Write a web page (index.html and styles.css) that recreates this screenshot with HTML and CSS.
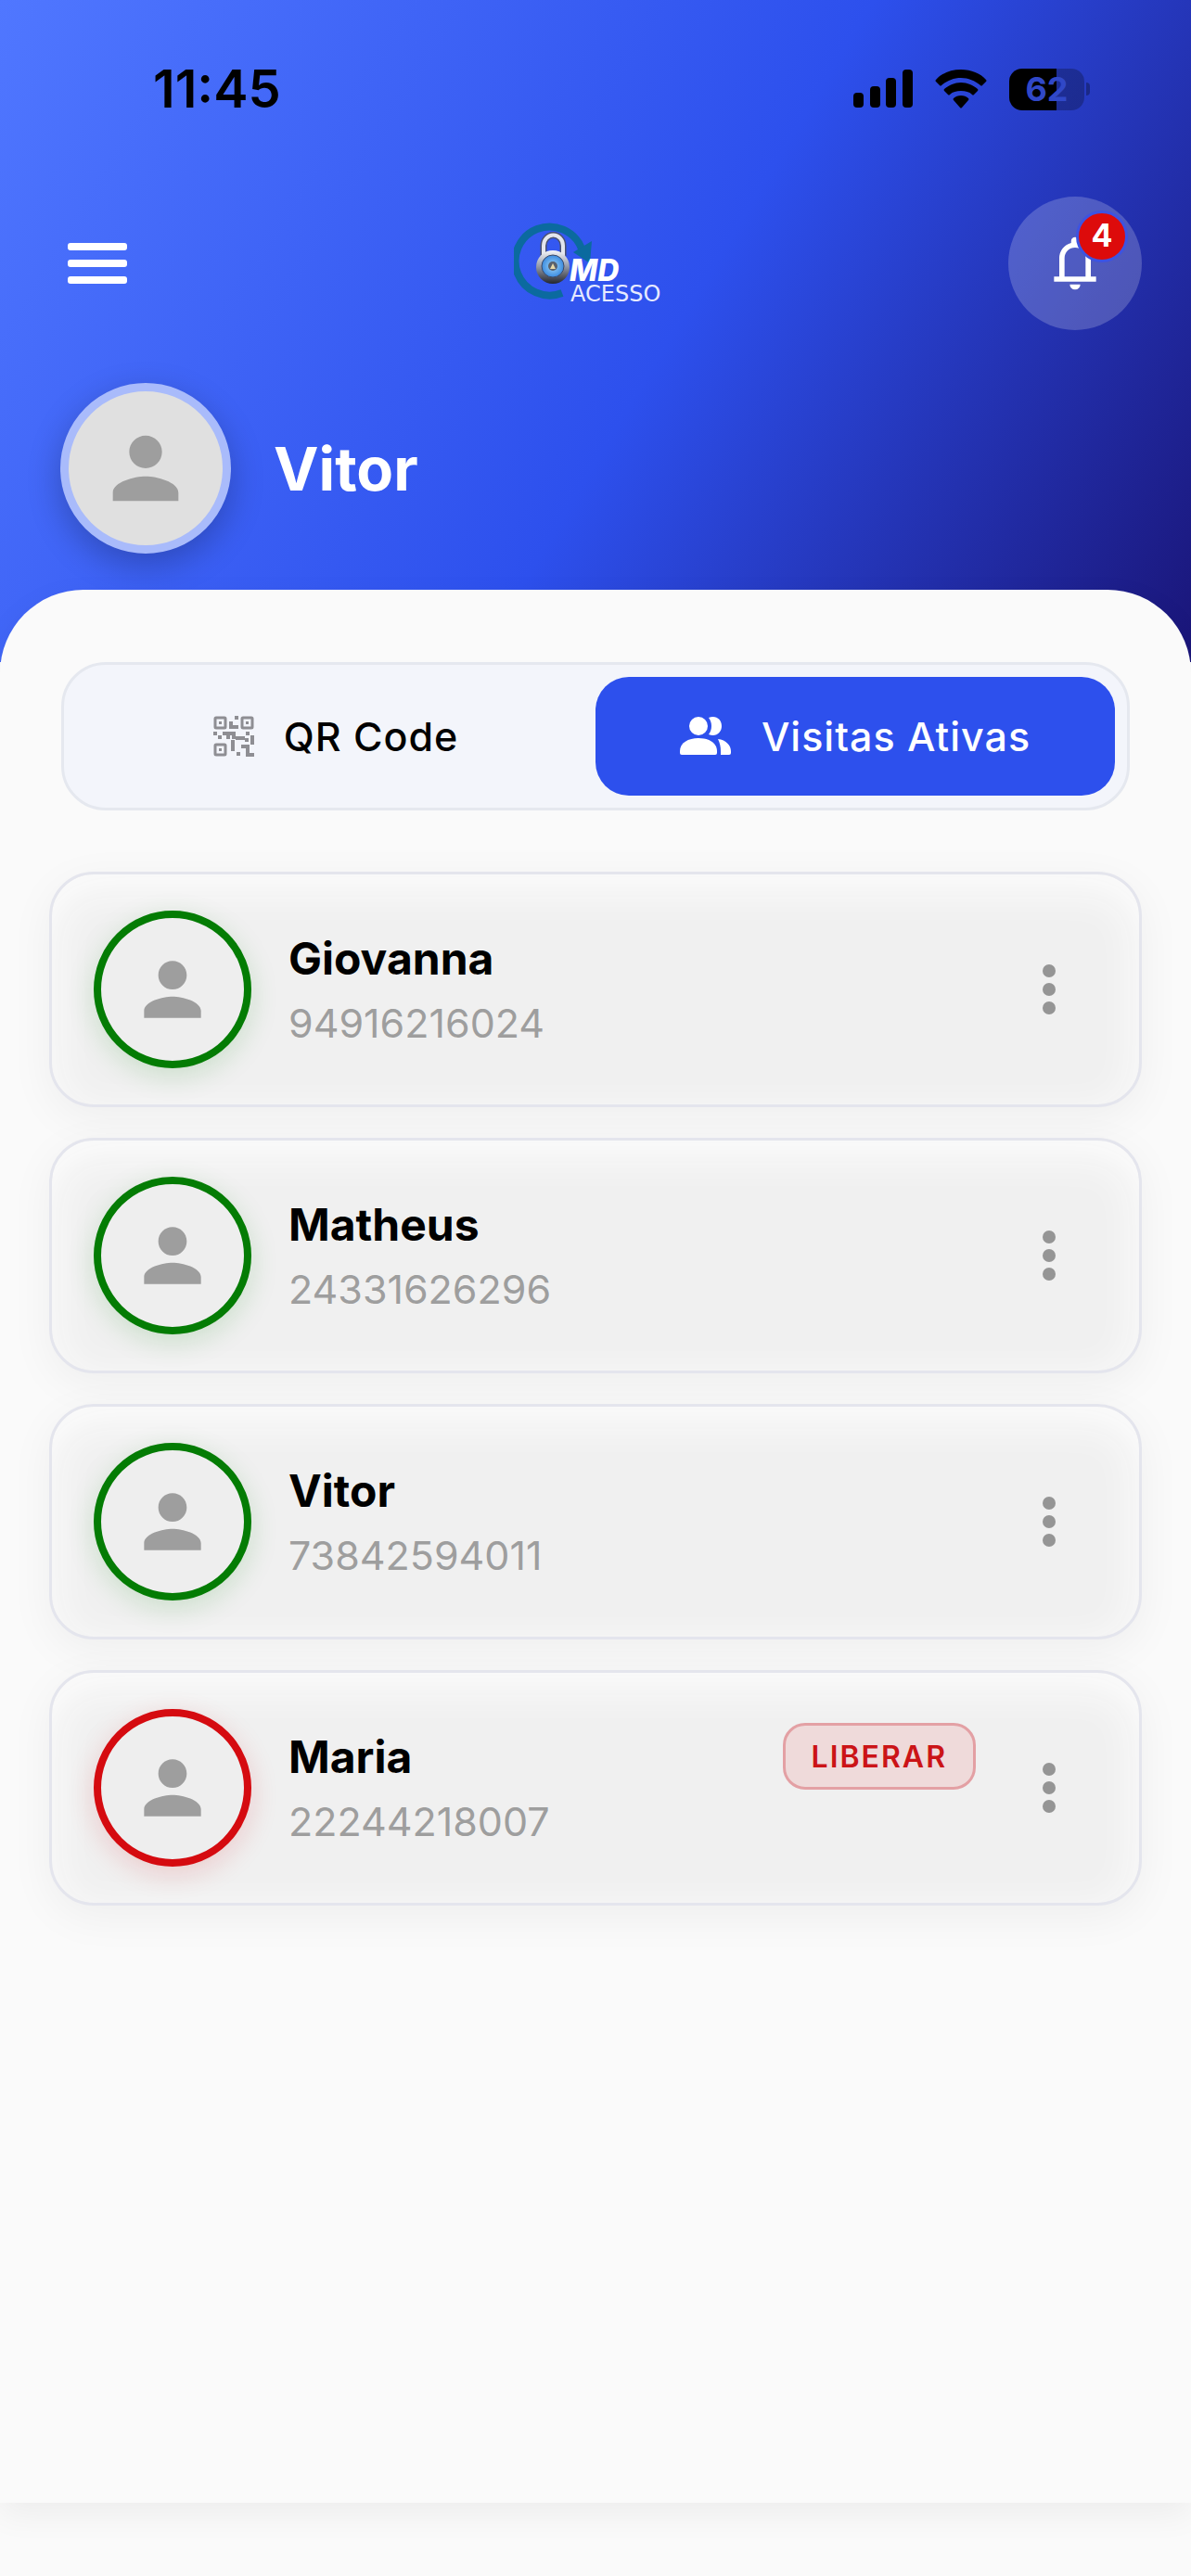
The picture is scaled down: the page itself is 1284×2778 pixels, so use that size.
FILE: index.html
```html
<!DOCTYPE html>
<html lang="pt-BR">
    <head>
        <meta charset="utf-8">
        <meta name="viewport" content="width=device-width, initial-scale=1">
        <title>MD Acesso - Visitas Ativas</title>
        <link rel="stylesheet" href="styles.css">
    </head>
    <body>
        <!-- icones reutilizados -->
        <svg class="sprites" aria-hidden="true">
            <symbol id="pessoa" viewBox="0 0 24 24">
                <path d="M12 12c2.21 0 4-1.79 4-4s-1.79-4-4-4-4 1.79-4 4 1.79 4 4 4zm0 2c-2.67 0-8 1.34-8 4v2h16v-2c0-2.66-5.33-4-8-4z"/>
            </symbol>
            <symbol id="pontos" viewBox="0 0 14 54">
                <circle cx="7" cy="7" r="7"/>
                <circle cx="7" cy="27" r="7"/>
                <circle cx="7" cy="47" r="7"/>
            </symbol>
        </svg>

        <header class="topo">
            <div class="status">
                <span class="hora">11:45</span>
                <div class="status-icones">
                    <svg width="64" height="42" viewBox="0 0 64 42">
                        <rect x="0" y="25" width="11" height="16" rx="4"/>
                        <rect x="18" y="18" width="11" height="23" rx="4"/>
                        <rect x="35" y="9" width="11" height="32" rx="4"/>
                        <rect x="53" y="0" width="11" height="41" rx="4"/>
                    </svg>
                    <svg width="56" height="42" viewBox="0 0 56 42">
                        <path d="M28 0C17 0 7 4 1 11q-1 1 0 2l4 4q1 1 2 0C13 12 20 9 28 9s15 3 21 8q1 1 2 0l4-4q1-1 0-2C49 4 39 0 28 0z"/>
                        <path d="M28 14c-7 0-13 3-18 7q-1 1 0 2l4 4q1 1 2 0c3-3 7-4 12-4s9 1 12 4q1 1 2 0l4-4q1-1 0-2c-5-4-11-7-18-7z"/>
                        <path d="M28 28c-3 0-6 1-8 3q-1 1 0 2l7 8q1 1 2 0l7-8q1-1 0-2c-2-2-5-3-8-3z"/>
                    </svg>
                    <div class="bateria"><span>62</span></div>
                </div>
            </div>

            <nav class="barra">
                <button class="btn-menu" aria-label="Abrir menu">
                    <svg width="64" height="44" viewBox="0 0 64 44">
                        <rect x="0" y="0" width="64" height="8" rx="3"/>
                        <rect x="0" y="18" width="64" height="8" rx="3"/>
                        <rect x="0" y="36" width="64" height="8" rx="3"/>
                    </svg>
                </button>

                <svg class="logo" width="176" height="92" viewBox="0 0 176 92" role="img" aria-label="MD Acesso">
                    <defs>
                        <linearGradient id="metal" x1="0" y1="0" x2="0" y2="1">
                            <stop offset="0" stop-color="#f4f6fa"/>
                            <stop offset=".45" stop-color="#9aa0ae"/>
                            <stop offset="1" stop-color="#23262f"/>
                        </linearGradient>
                        <radialGradient id="vidro">
                            <stop offset="0" stop-color="#9fd4f7"/>
                            <stop offset="1" stop-color="#3a8be0"/>
                        </radialGradient>
                    </defs>
                    <path d="M52 78A37 37 0 1 1 73 30" fill="none" stroke="#0b6a9f" stroke-width="8"/>
                    <path d="M64 34l20-12-2 24z" fill="#0b6a9f"/>
                    <path d="M32 38V27a10 11 0 0 1 21 0v11" fill="none" stroke="#4b5270" stroke-width="7"/>
                    <path d="M32 38V27a10 11 0 0 1 21 0v11" fill="none" stroke="#e3e6ee" stroke-width="4"/>
                    <circle cx="42" cy="50" r="18" fill="url(#metal)"/>
                    <circle cx="42" cy="49" r="12" fill="url(#vidro)" stroke="#3c4a68"/>
                    <circle cx="42" cy="49" r="5" fill="#59616d"/>
                    <path d="M42 46l3 6h-6z" fill="#e8d9a8"/>
                    <text class="logo-md" x="60" y="65">MD</text>
                    <text class="logo-acesso" x="61" y="87">ACESSO</text>
                </svg>

                <button class="btn-sino" aria-label="Notificações">
                    <svg width="68" height="68" viewBox="0 0 24 24">
                        <path d="M4 19v-2h2v-7q0-2.075 1.25-3.687T10.5 4.2v-.7q0-.625.438-1.062T12 2t1.063.438T13.5 3.5v.7q2 .5 3.25 2.113T18 10v7h2v2zm8 3q-.825 0-1.412-.587T10 20h4q0 .825-.587 1.413T12 22m-4-5h8v-7q0-1.65-1.175-2.825T12 6T9.175 7.175T8 10z"/>
                    </svg>
                    <span class="contador">4</span>
                </button>
            </nav>

            <div class="perfil">
                <div class="perfil-foto">
                    <svg width="106" height="106"><use href="#pessoa"/></svg>
                </div>
                <h1 class="perfil-nome">Vitor</h1>
            </div>
        </header>

        <main class="painel">
            <div class="abas">
                <button class="aba">
                    <svg width="44" height="44" viewBox="0 0 44 44">
                        <g fill="none" stroke="currentColor" stroke-width="3">
                            <rect x="2" y="2" width="11" height="11" rx="1"/>
                            <rect x="31" y="2" width="11" height="11" rx="1"/>
                            <rect x="2" y="31" width="11" height="11" rx="1"/>
                        </g>
                        <path d="M6 6h3v3H6zM35 6h3v3h-3zM6 35h3v3H6zM23 0h4v4h-4zM17 6h4v4h6v4H17zM0 17h4v4H0zM5 21h4v4H5zM10 17h14v4h-6v4h-4v-4h-4zM20 21h4v1h10v4H24v-1h-4zM35 17h4v4h-4zM40 21h4v10h-4zM34 24h4v4h-4zM19 26h4v12h-4zM25 39h4v4h-4zM30 31h9v9h5v4h-9v-9h-5z"/>
                    </svg>
                    QR Code
                </button>
                <button class="aba ativa">
                    <svg width="56" height="42" viewBox="0 0 56 42">
                        <circle cx="20" cy="10" r="10"/>
                        <path d="M31 1c8-3 14 2 14 9s-6 12-14 9c4-5 4-13 0-18z"/>
                        <path d="M0 37c0-9 9-14 20-14s20 5 20 14v2q0 2-2 2H2q-2 0-2-2z"/>
                        <path d="M41 24c9 1 14 7 14 13v2q0 2-2 2h-9v-4c0-5-1-9-3-13z"/>
                    </svg>
                    Visitas Ativas
                </button>
            </div>

            <ul class="visitas">
                <li class="visita">
                    <div class="foto"><svg width="92" height="92"><use href="#pessoa"/></svg></div>
                    <div class="dados">
                        <div class="linha"><h2 class="nome">Giovanna</h2></div>
                        <p class="documento">94916216024</p>
                    </div>
                    <button class="mais" aria-label="Mais opções"><svg width="14" height="54"><use href="#pontos"/></svg></button>
                </li>
                <li class="visita">
                    <div class="foto"><svg width="92" height="92"><use href="#pessoa"/></svg></div>
                    <div class="dados">
                        <div class="linha"><h2 class="nome">Matheus</h2></div>
                        <p class="documento">24331626296</p>
                    </div>
                    <button class="mais" aria-label="Mais opções"><svg width="14" height="54"><use href="#pontos"/></svg></button>
                </li>
                <li class="visita">
                    <div class="foto"><svg width="92" height="92"><use href="#pessoa"/></svg></div>
                    <div class="dados">
                        <div class="linha"><h2 class="nome">Vitor</h2></div>
                        <p class="documento">73842594011</p>
                    </div>
                    <button class="mais" aria-label="Mais opções"><svg width="14" height="54"><use href="#pontos"/></svg></button>
                </li>
                <li class="visita pendente">
                    <div class="foto"><svg width="92" height="92"><use href="#pessoa"/></svg></div>
                    <div class="dados">
                        <div class="linha">
                            <h2 class="nome">Maria</h2>
                            <button class="liberar">LIBERAR</button>
                        </div>
                        <p class="documento">22244218007</p>
                    </div>
                    <button class="mais" aria-label="Mais opções"><svg width="14" height="54"><use href="#pontos"/></svg></button>
                </li>
            </ul>
        </main>
    </body>
</html>
```

FILE: styles.css
```css
*{
    box-sizing: border-box;
    margin: 0;
    padding: 0;
}

body{
    display: flex;
    flex-direction: column;
    min-height: 100vh;
    background-color: #fafafa;
    font-family: Inter, "Liberation Sans", sans-serif;
    color: #000;
}

button{
    border: none;
    background: none;
    font-family: inherit;
    color: inherit;
    cursor: pointer;
}

svg{
    display: block;
    fill: currentColor;
}

.sprites{
    position: absolute;
    width: 0;
    height: 0;
}

/* topo */
.topo{
    padding: 64px 53px 117px;
    background: linear-gradient(121deg, #5077ff, #2d50ed 55%, #1a1578);
    color: #fff;
}

.status{
    display: flex;
    align-items: center;
    justify-content: space-between;
    height: 64px;
    margin-bottom: 84px;
    padding: 0 56px 0 112px;
    color: #000;
}

.hora{
    font-size: 56px;
    font-weight: 600;
}

.status-icones{
    display: flex;
    align-items: center;
    gap: 24px;
}

.bateria{
    position: relative;
    width: 81px;
    margin-right: 6px;
    border-radius: 14px;
    background: linear-gradient(90deg, #000 63%, rgba(0, 0, 0, .25) 63%);
    color: #3048c8;
    font-size: 36px;
    font-weight: 700;
    line-height: 45px;
    text-align: center;
}

.bateria::after{
    content: "";
    position: absolute;
    top: 15px;
    right: -6px;
    width: 4px;
    height: 14px;
    border-radius: 0 4px 4px 0;
    background-color: rgba(0, 0, 0, .3);
}

.barra{
    display: grid;
    grid-template-columns: 1fr auto 1fr;
    align-items: center;
    margin-bottom: 57px;
}

.btn-menu{
    justify-self: start;
    padding: 20px;
}

.logo-md{
    font-size: 32px;
    font-weight: 800;
    font-style: italic;
    fill: #fff;
}

.logo-acesso{
    font-family: "DejaVu Sans", sans-serif;
    font-size: 24px;
    fill: #e6eaff;
}

.btn-sino{
    position: relative;
    display: flex;
    align-items: center;
    justify-content: center;
    justify-self: end;
    width: 144px;
    height: 144px;
    border-radius: 50%;
    background-color: rgba(255, 255, 255, .2);
}

.contador{
    position: absolute;
    top: 15px;
    right: 15px;
    width: 56px;
    height: 56px;
    border: 3px solid #3d53e2;
    border-radius: 50%;
    background-color: #dd0b0b;
    font-size: 34px;
    font-weight: 700;
    line-height: 48px;
}

.perfil{
    display: flex;
    align-items: center;
    gap: 46px;
    padding-left: 12px;
}

.perfil-foto, .foto{
    display: flex;
    flex-shrink: 0;
    align-items: center;
    justify-content: center;
    border-radius: 50%;
    color: #9e9e9e;
}

.perfil-foto{
    width: 184px;
    height: 184px;
    border: 9px solid #a9bbfb;
    background-color: #e0e0e0;
    box-shadow: 0 12px 36px rgba(0, 0, 0, .24);
}

.perfil-nome{
    font-size: 65px;
    font-weight: 700;
}

/* painel */
.painel{
    flex: 1;
    margin: -78px 0 79px;
    padding: 78px 53px 48px;
    border-radius: 90px 90px 0 0;
    background-color: #fafafa;
    box-shadow: 0 12px 36px rgba(0, 0, 0, .06);
}

.abas{
    display: flex;
    margin: 0 13px 66px;
    padding: 13px;
    border: 3px solid #e5e8ef;
    border-radius: 48px;
    background-color: #f3f5fb;
}

.aba{
    display: flex;
    flex: 1;
    align-items: center;
    justify-content: center;
    gap: 32px;
    height: 128px;
    border-radius: 36px;
    font-size: 43px;
    font-weight: 500;
    letter-spacing: 1px;
}

.aba svg{
    color: #8e8e93;
}

.aba.ativa{
    background-color: #2d50ed;
    color: #fff;
}

.aba.ativa svg{
    color: #fff;
}

.visitas{
    display: flex;
    flex-direction: column;
    gap: 33px;
    list-style: none;
}

.visita{
    display: flex;
    align-items: center;
    gap: 30px;
    padding: 39px 48px 39px 45px;
    border: 3px solid #e4e5ed;
    border-radius: 48px;
    background-color: #f0f0f0;
    box-shadow: 0 12px 48px rgba(0, 0, 0, .05), inset 0 14px 48px #fdfdfd;
}

.foto{
    width: 170px;
    height: 170px;
    margin-right: 10px;
    border: 8px solid #047c04;
    background-color: #eee;
    box-shadow: 0 8px 30px rgba(0, 128, 0, .16);
}

.pendente .foto{
    border-color: #d50b10;
    box-shadow: 0 8px 30px rgba(213, 11, 16, .16);
}

.dados{
    flex: 1;
    padding-bottom: 4px;
}

.linha{
    display: flex;
    align-items: center;
    justify-content: space-between;
    height: 72px;
    margin-bottom: 4px;
}

.nome{
    font-size: 48px;
    font-weight: 700;
}

.documento{
    color: #9e9e9e;
    font-size: 43px;
    line-height: 60px;
}

.liberar{
    height: 72px;
    padding: 0 28px;
    border: 3px solid #e3a0a4;
    border-radius: 24px;
    background-color: #efdada;
    color: #cb1417;
    font-size: 32px;
    font-weight: 600;
    letter-spacing: 2px;
}

.mais{
    display: flex;
    justify-content: center;
    width: 98px;
    padding: 20px 0;
    color: #959595;
}
```
